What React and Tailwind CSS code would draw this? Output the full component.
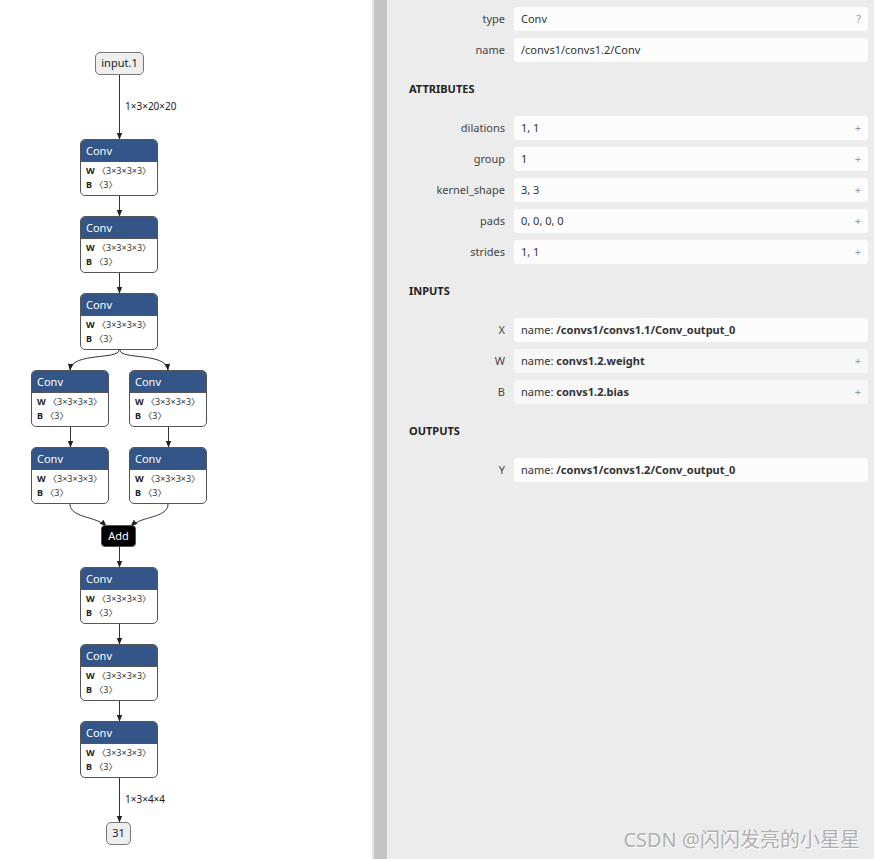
import React from "react";

const font = { fontFamily: '"Noto Sans", "Noto Sans CJK SC", sans-serif' };

const convNodes = [
  [80, 139], [80, 216], [80, 293],
  [31, 370], [129, 370],
  [31, 447], [129, 447],
  [80, 567], [80, 644], [80, 721],
];

const ConvNode = ({ x, y }) => (
  <div
    className="absolute w-[78px] h-[57px] rounded-[5px] border border-[#555] bg-white overflow-hidden"
    style={{ left: x, top: y }}
  >
    <div className="h-[22px] bg-[#335588] text-white text-[11px] leading-[22px] pl-[5px] border-b border-[#555]">Conv</div>
    <div className="pl-[5px] pt-[2px] text-[9px] leading-[14px] text-[#222]">
      <div><span className="font-bold">W</span> <span className="text-[#333]">〈3×3×3×3〉</span></div>
      <div><span className="font-bold">B</span> <span className="text-[#333]">〈3〉</span></div>
    </div>
  </div>
);

const Graph = () => (
  <div className="relative w-[372px] h-full bg-white">
    <svg className="absolute inset-0" width="372" height="859">
      <defs>
        <marker id="arr" viewBox="0 0 10 10" refX="9" refY="5" markerWidth="7" markerHeight="7" orient="auto">
          <path d="M0 1 L10 5 L0 9 z" fill="#222" />
        </marker>
      </defs>
      <g stroke="#333" strokeWidth="1" fill="none" markerEnd="url(#arr)">
        <path d="M119.5 75 L119.5 139" />
        <path d="M119.5 196 L119.5 216" />
        <path d="M119.5 273 L119.5 293" />
        <path d="M119 350 C119 360, 72 352, 70 370" />
        <path d="M120 350 C120 360, 166 352, 168 370" />
        <path d="M70.5 427 L70.5 447" />
        <path d="M168.5 427 L168.5 447" />
        <path d="M70 504 C70 518, 96 516, 106 526" />
        <path d="M168 504 C168 518, 142 516, 131 526" />
        <path d="M119.5 547 L119.5 567" />
        <path d="M119.5 624 L119.5 644" />
        <path d="M119.5 701 L119.5 721" />
        <path d="M119.5 778 L119.5 822" />
      </g>
    </svg>
    <div className="absolute left-[95px] top-[52px] w-[49px] h-[23px] rounded-[5px] border border-[#777] bg-[#eeeeee] text-[11px] text-[#222] flex items-center justify-center">input.1</div>
    <div className="absolute left-[125px] top-[99px] text-[10px] text-[#222]">1×3×20×20</div>
    {convNodes.map(([x, y], i) => (
      <ConvNode key={i} x={x} y={y} />
    ))}
    <div className="absolute left-[101px] top-[525px] w-[35px] h-[22px] rounded-[4px] border border-[#555] bg-black text-white text-[11px] flex items-center justify-center">Add</div>
    <div className="absolute left-[125px] top-[792px] text-[10px] text-[#222]">1×3×4×4</div>
    <div className="absolute left-[106px] top-[822px] w-[25px] h-[23px] rounded-[5px] border border-[#777] bg-[#eeeeee] text-[11px] text-[#222] flex items-center justify-center">31</div>
  </div>
);

const Row = ({ label, children, action, dim }) => (
  <div className="flex items-center h-[24px] mb-[7px]">
    <div className="w-[127px] pr-[9px] text-right text-[11px] text-[#444]">{label}</div>
    <div className={`flex-1 h-[24px] rounded-[3px] ${dim ? "bg-[#f7f7f7]" : "bg-[#fcfcfc]"} flex items-center justify-between pl-[7px] pr-[7px] text-[11px] text-[#333]`}>
      <div>{children}</div>
      {action && <span className="text-[#999] text-[11px]">{action}</span>}
    </div>
  </div>
);

const Heading = ({ children }) => (
  <div className="h-[40px] mb-[7px] flex items-center pl-[22px] text-[11px] font-bold text-[#222]">{children}</div>
);

const Sidebar = () => (
  <div className="flex-1 bg-[#ececec] pt-[7px] pr-[6px]">
    <Row label="type" action="?">Conv</Row>
    <Row label="name">/convs1/convs1.2/Conv</Row>
    <Heading>ATTRIBUTES</Heading>
    <Row label="dilations" action="+">1, 1</Row>
    <Row label="group" action="+">1</Row>
    <Row label="kernel_shape" action="+">3, 3</Row>
    <Row label="pads" action="+">0, 0, 0, 0</Row>
    <Row label="strides" action="+">1, 1</Row>
    <Heading>INPUTS</Heading>
    <Row label="X">name: <span className="font-bold">/convs1/convs1.1/Conv_output_0</span></Row>
    <Row label="W" action="+" dim>name: <span className="font-bold">convs1.2.weight</span></Row>
    <Row label="B" action="+" dim>name: <span className="font-bold">convs1.2.bias</span></Row>
    <Heading>OUTPUTS</Heading>
    <Row label="Y">name: <span className="font-bold">/convs1/convs1.2/Conv_output_0</span></Row>
  </div>
);

export default function App() {
  return (
    <div className="relative flex w-[874px] h-[859px] overflow-hidden bg-white" style={font}>
      <Graph />
      <div className="w-[2px] bg-[#e4e4e4]" />
      <div className="w-[13px] bg-[#c4c4c4]" />
      <Sidebar />
      <div className="absolute right-[14px] bottom-[4px] text-[20px] text-[#b0b0b0] [text-shadow:1px_1px_1px_#ffffff]">
        CSDN @闪闪发亮的小星星
      </div>
    </div>
  );
}
